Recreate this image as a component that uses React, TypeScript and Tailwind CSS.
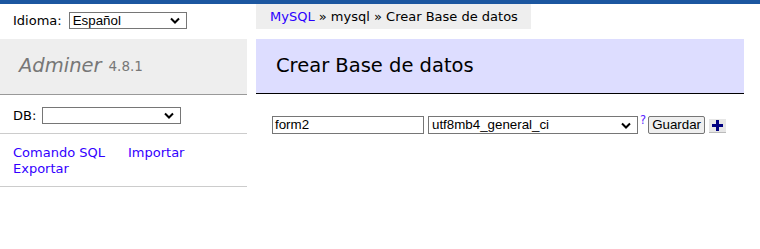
import React from 'react';

const Chevron: React.FC = () => (
  <svg width="10" height="7" viewBox="0 0 10 7" className="shrink-0">
    <path d="M1 1.5 L5 5.5 L9 1.5" fill="none" stroke="#000" strokeWidth="2" />
  </svg>
);

interface SelectBoxProps {
  value: string;
  className?: string;
}

const SelectBox: React.FC<SelectBoxProps> = ({ value, className = '' }) => (
  <div
    className={`flex items-center justify-between border border-[#767676] bg-white pl-[3px] pr-[6px] text-[13.33px] leading-none text-black font-['Liberation_Sans',Arial,sans-serif] ${className}`}
  >
    <span>{value}</span>
    <Chevron />
  </div>
);

const PlusIcon: React.FC = () => (
  <div className="flex h-[14px] w-[17px] items-center justify-center border-b border-[#bbb] bg-[#e6e6e6] mt-[3px]">
    <svg width="11" height="11" viewBox="0 0 11 11">
      <rect x="4" y="0" width="3" height="11" fill="#000080" />
      <rect x="0" y="4" width="11" height="3" fill="#000080" />
    </svg>
  </div>
);

export default function App() {
  return (
    <div className="w-[760px] h-[249px] bg-white font-['DejaVu_Sans',Verdana,sans-serif] text-[13px] leading-[16.25px] text-black overflow-hidden">
      {/* top bar */}
      <div className="h-[4px] bg-[#1c57a0]" />

      <div className="flex">
        {/* Sidebar */}
        <div className="w-[247px] shrink-0">
          <div className="h-[35px] pt-[8px] pl-[13px] flex items-start">
            <span className="mr-[7px] leading-[17px]">Idioma:</span>
            <SelectBox value="Español" className="w-[118px] h-[17px]" />
          </div>

          <div className="h-[56px] bg-[#eee] border-b border-[#999] flex items-center pl-[19px] pb-[2px]">
            <span className="italic text-[19.5px] text-[#777] leading-none">Adminer</span>
            <span className="ml-[7px] text-[13.5px] text-[#777] leading-none mt-[3px]">4.8.1</span>
          </div>

          <div className="h-[39px] border-b border-[#ccc] pt-[12px] pl-[13px] flex items-start">
            <span className="mr-[6px] leading-[17px]">DB:</span>
            <SelectBox value="" className="w-[139px] h-[17px]" />
          </div>

          <div className="h-[53px] border-b border-[#ccc] pt-[11px] pl-[13px] text-[#3300ff]">
            <div className="flex">
              <span className="w-[115px]">Comando SQL</span>
              <span>Importar</span>
            </div>
            <div>Exportar</div>
          </div>
        </div>

        {/* Content */}
        <div className="ml-[9px] w-[488px]">
          <div className="inline-block h-[25px] bg-[#eee] pl-[14px] pr-[13px] leading-[25px] whitespace-nowrap">
            <span className="text-[#2a00ff]">MySQL</span> » mysql » Crear Base de datos
          </div>

          <h2 className="mt-[10px] h-[55px] bg-[#ddf] border-b border-black pl-[20px] flex items-center text-[19.5px] leading-[24px] font-normal">
            Crear Base de datos
          </h2>

          <div className="mt-[22px] pl-[16px] flex items-start">
            <div className="w-[152px] h-[18px] border border-[#767676] bg-white pl-[2px] text-[13.33px] leading-[16px] font-['Liberation_Sans',Arial,sans-serif]">
              form2
            </div>
            <SelectBox value="utf8mb4_general_ci" className="ml-[4px] w-[210px] h-[18px]" />
            <span className="ml-[2px] text-[11.5px] leading-none text-[#5522ff] -mt-[1px]">?</span>
            <div className="ml-[2px] w-[57px] h-[18px] border border-[#767676] rounded-[2px] bg-[#efefef] flex items-center justify-center text-[13.33px] leading-none font-['Liberation_Sans',Arial,sans-serif]">
              Guardar
            </div>
            <div className="ml-[4px]">
              <PlusIcon />
            </div>
          </div>
        </div>
      </div>
    </div>
  );
}
